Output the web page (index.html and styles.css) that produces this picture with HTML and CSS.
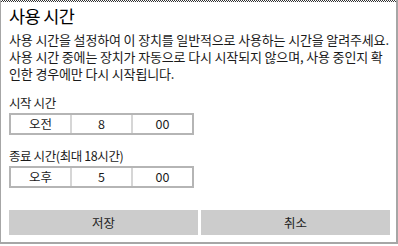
FILE: index.html
```html
<!DOCTYPE html>
<html>
<head>
<meta charset="utf-8">
<title>사용 시간</title>
<link rel="stylesheet" href="styles.css">
</head>
<body>
<div class="dialog">
    <div class="focus_line"></div>
    <div class="content">
        <div class="title">사용 시간</div>
        <div class="desc">사용 시간을 설정하여 이 장치를 일반적으로 사용하는 시간을 알려주세요.<br>사용 시간 중에는 장치가 자동으로 다시 시작되지 않으며, 사용 중인지 확<br>인한 경우에만 다시 시작됩니다.</div>
        <div class="field">
            <div class="field_label">시작 시간</div>
            <div class="picker">
                <div class="cell">오전</div>
                <div class="cell">8</div>
                <div class="cell">00</div>
            </div>
        </div>
        <div class="field">
            <div class="field_label">종료 시간(최대 18시간)</div>
            <div class="picker">
                <div class="cell">오후</div>
                <div class="cell">5</div>
                <div class="cell">00</div>
            </div>
        </div>
        <div class="btn_row">
            <button class="btn">저장</button>
            <button class="btn">취소</button>
        </div>
    </div>
</div>
</body>
</html>
```

FILE: styles.css
```css
body {
    margin: 0;
    background-color: #fff;
    font-family: "Noto Sans CJK KR", "Noto Sans", sans-serif;
    color: #1a1a1a;
}
.dialog {
    width: 398px;
    height: 244px;
    box-sizing: border-box;
    border-left: 1px solid #a6a6a6;
    border-right: 2px solid #a6a6a6;
    border-bottom: 2px solid #a6a6a6;
    display: flex;
    flex-direction: column;
}
.focus_line {
    height: 2px;
    background: repeating-conic-gradient(#333 0 25%, #fff 0 50%) 0 0 / 2px 2px;
}
.content {
    flex: 1;
    padding: 2px 6px 0 8px;
    display: flex;
    flex-direction: column;
}
.title {
    font-size: 17.5px;
    line-height: 24px;
    letter-spacing: -0.6px;
    color: #000;
}
.desc {
    margin-top: 3px;
    font-size: 13px;
    line-height: 17px;
    letter-spacing: -0.15px;
    white-space: nowrap;
}
.field {
    margin-top: 13px;
}
.field + .field {
    margin-top: 13px;
}
.field_label {
    font-size: 12.5px;
    line-height: 16px;
    letter-spacing: -0.4px;
    margin-bottom: 2px;
}
.picker {
    display: flex;
    width: 185px;
    height: 22px;
    box-sizing: border-box;
    border: 2px solid #b5b5b5;
}
.cell {
    flex: 1;
    text-align: center;
    font-size: 12.5px;
    line-height: 18px;
}
.cell + .cell {
    border-left: 2px solid #d6d6d6;
}
.btn_row {
    display: flex;
    gap: 3px;
    margin-top: 22px;
    width: 381px;
}
.btn {
    flex: 1;
    height: 25px;
    background-color: #cccccc;
    border: none;
    font-family: inherit;
    font-size: 12.5px;
    color: #222;
    padding: 0;
}
```
